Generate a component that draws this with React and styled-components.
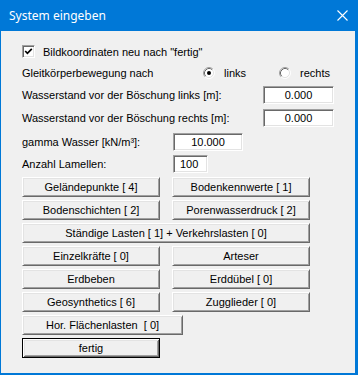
import React from "react";
import styled, { createGlobalStyle } from "styled-components";

const GlobalStyle = createGlobalStyle`
  html, body {
    margin: 0;
    padding: 0;
  }
  body {
    font-family: "Liberation Sans", Arial, sans-serif;
  }
`;

const Window = styled.div`
  width: 358px;
  height: 375px;
  box-sizing: border-box;
  display: flex;
  flex-direction: column;
  background: #0078d7;
  padding: 0 3px 2px 1px;
`;

const TitleBar = styled.div`
  flex: 0 0 31px;
  display: flex;
  align-items: center;
  justify-content: space-between;
  padding: 0 7px 0 8px;
  color: #fff;
  font-family: "Noto Sans", "Open Sans", sans-serif;
  font-size: 12px;
`;

const Body = styled.div`
  flex: 1;
  background: #f0f0f0;
  padding: 10px 0 0 21px;
  display: flex;
  flex-direction: column;
  font-size: 11px;
  color: #000;
`;

const Row = styled.div`
  display: flex;
  align-items: center;
  height: ${(p) => p.$h || 18}px;
  margin-top: ${(p) => p.$mt || 0}px;
`;

const Label = styled.span`
  flex: none;
  width: ${(p) => (p.$w ? `${p.$w}px` : "auto")};
  white-space: nowrap;
`;

const Sunken = styled.span`
  box-sizing: border-box;
  display: inline-flex;
  align-items: center;
  justify-content: center;
  background: #fff;
  border: 1px solid;
  border-color: #a0a0a0 #fff #fff #a0a0a0;
  box-shadow: inset 1px 1px 0 #696969, inset -1px -1px 0 #e3e3e3;
`;

const CheckBox = styled(Sunken)`
  width: 13px;
  height: 13px;
  margin-right: 8px;
`;

const Field = styled.input`
  box-sizing: border-box;
  width: ${(p) => p.$w}px;
  height: 18px;
  margin: 0;
  padding: 0 ${(p) => (p.$align === "left" ? "0 0 6px" : "0")};
  background: #fff;
  border: 1px solid;
  border-color: #a0a0a0 #fff #fff #a0a0a0;
  box-shadow: inset 1px 1px 0 #696969, inset -1px -1px 0 #e3e3e3;
  font-family: "Liberation Sans", Arial, sans-serif;
  font-size: 11px;
  color: #000;
  text-align: ${(p) => p.$align || "center"};
  outline: none;
`;

const RadioOption = styled.label`
  display: flex;
  align-items: center;
  gap: 9px;
  width: ${(p) => p.$w}px;
`;

const ButtonGrid = styled.div`
  display: grid;
  grid-template-columns: 138px 138px;
  grid-auto-rows: 20px;
  column-gap: 12px;
  row-gap: 3px;
  margin-top: 4px;
`;

const Button = styled.button`
  box-sizing: border-box;
  width: ${(p) => (p.$w ? `${p.$w}px` : "100%")};
  height: 20px;
  margin: 0;
  padding: 0;
  grid-column: ${(p) => (p.$span ? "1 / -1" : "auto")};
  justify-self: start;
  background: #f0f0f0;
  font-family: "Liberation Sans", Arial, sans-serif;
  font-size: 11px;
  color: #000;
  white-space: pre;
  border: 1px solid;
  border-color: ${(p) =>
    p.$default ? "#000" : "#fff #696969 #696969 #fff"};
  box-shadow: ${(p) =>
    p.$default
      ? "inset 1px 1px 0 #fff, inset -1px -1px 0 #696969, inset 2px 2px 0 #e3e3e3, inset -2px -2px 0 #a0a0a0"
      : "inset 1px 1px 0 #e3e3e3, inset -1px -1px 0 #a0a0a0"};
`;

const CloseIcon = () => (
  <svg width="11" height="11" viewBox="0 0 11 11">
    <path d="M0.5 0.5 L10.5 10.5 M10.5 0.5 L0.5 10.5" stroke="#fff" strokeWidth="1.1" />
  </svg>
);

const CheckMark = () => (
  <svg width="9" height="9" viewBox="0 0 9 9">
    <polyline points="1.2,4 3.4,6.3 7.8,1.8" fill="none" stroke="#000" strokeWidth="1.7" />
  </svg>
);

const Radio = ({ checked }) => (
  <svg width="12" height="12" viewBox="0 0 12 12">
    <circle cx="6" cy="6" r="5" fill="#fff" />
    <path d="M2.11 9.89 A5.5 5.5 0 0 1 9.89 2.11" fill="none" stroke="#a0a0a0" />
    <path d="M9.89 2.11 A5.5 5.5 0 0 1 2.11 9.89" fill="none" stroke="#fff" />
    <path d="M2.82 9.18 A4.5 4.5 0 0 1 9.18 2.82" fill="none" stroke="#696969" />
    <path d="M9.18 2.82 A4.5 4.5 0 0 1 2.82 9.18" fill="none" stroke="#e3e3e3" />
    {checked && <circle cx="6" cy="6" r="2" fill="#000" />}
  </svg>
);

const buttons = [
  { label: "Geländepunkte [ 4]" },
  { label: "Bodenkennwerte [ 1]" },
  { label: "Bodenschichten [ 2]" },
  { label: "Porenwasserdruck [ 2]" },
  { label: "Ständige Lasten [ 1] + Verkehrslasten [ 0]", span: true },
  { label: "Einzelkräfte [ 0]" },
  { label: "Arteser" },
  { label: "Erdbeben" },
  { label: "Erddübel [ 0]" },
  { label: "Geosynthetics [ 6]" },
  { label: "Zugglieder [ 0]" },
  { label: "Hor. Flächenlasten  [ 0]", span: true, width: 161 },
  { label: "fertig", width: 138, span: true, isDefault: true },
];

const App = () => (
  <>
    <GlobalStyle />
    <Window>
      <TitleBar>
        <span>System eingeben</span>
        <CloseIcon />
      </TitleBar>
      <Body>
        <Row $h={21}>
          <CheckBox>
            <CheckMark />
          </CheckBox>
          <Label>Bildkoordinaten neu nach "fertig"</Label>
        </Row>
        <Row $h={21}>
          <Label $w={181}>Gleitkörperbewegung nach</Label>
          <RadioOption $w={76}>
            <Radio checked />
            links
          </RadioOption>
          <RadioOption $w={70}>
            <Radio />
            rechts
          </RadioOption>
        </Row>
        <Row $mt={3}>
          <Label $w={241}>Wasserstand vor der Böschung links [m]:</Label>
          <Field $w={71} value="0.000" readOnly />
        </Row>
        <Row $mt={5}>
          <Label $w={241}>Wasserstand vor der Böschung rechts [m]:</Label>
          <Field $w={71} value="0.000" readOnly />
        </Row>
        <Row $mt={6}>
          <Label $w={151}>gamma Wasser [kN/m³]:</Label>
          <Field $w={70} value="10.000" readOnly />
        </Row>
        <Row $mt={4}>
          <Label $w={151}>Anzahl Lamellen:</Label>
          <Field $w={35} $align="left" value="100" readOnly />
        </Row>
        <ButtonGrid>
          {buttons.map((b) => (
            <Button
              key={b.label}
              $span={b.span}
              $w={b.width}
              $default={b.isDefault}
            >
              {b.label}
            </Button>
          ))}
        </ButtonGrid>
      </Body>
    </Window>
  </>
);

export default App;
